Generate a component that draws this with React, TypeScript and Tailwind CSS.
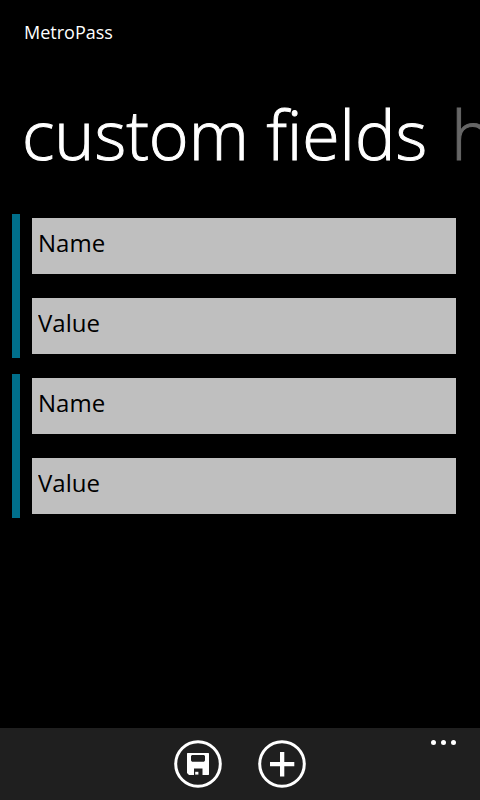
import React from "react";

const sections = [
  { title: "custom fields", active: true },
  { title: "history", active: false },
];

const customFields = [
  { id: "field-1", name: "Name", value: "Value" },
  { id: "field-2", name: "Name", value: "Value" },
];

function FieldInput({ id, label, text }: { id: string; label: string; text: string }) {
  return (
    <input
      id={id}
      type="text"
      aria-label={label}
      defaultValue={text}
      className="block h-14 w-full bg-[#bfbfbf] px-1.5 pb-2 text-2xl text-black outline-none"
    />
  );
}

function SaveIcon() {
  return (
    <svg viewBox="0 0 48 48" className="size-12" aria-hidden="true">
      <circle cx="24" cy="24" r="22.3" fill="none" stroke="#fff" strokeWidth="3" />
      <path
        fill="#fff"
        fillRule="evenodd"
        d="M13.5 13H34.5L35 13.5V34.5L34.5 35H28.5V28.5H20V35H15L13 33V13.5ZM18 15L17 16V20.5L18 21.7H30L31 20.5V16L30 15Z"
      />
      <path fill="#fff" d="M21.2 31.8H24.4V34.6H21.2Z" />
    </svg>
  );
}

function AddIcon() {
  return (
    <svg viewBox="0 0 48 48" className="size-12" aria-hidden="true">
      <circle cx="24" cy="24" r="22.3" fill="none" stroke="#fff" strokeWidth="3" />
      <path fill="#fff" d="M22 12H26.3V22H36.3V26.3H26.3V36.6H22V26.3H12V22H22Z" />
    </svg>
  );
}

function MoreIcon() {
  return (
    <svg viewBox="0 0 26 6" className="h-1.5 w-[26px]" aria-hidden="true" fill="#fff">
      <circle cx="3.5" cy="2.5" r="2.5" />
      <circle cx="13.5" cy="2.5" r="2.5" />
      <circle cx="23.5" cy="2.5" r="2.5" />
    </svg>
  );
}

export default function App() {
  return (
    <div className="flex min-h-screen flex-col overflow-hidden bg-black font-['Open_Sans','Noto_Sans',sans-serif] text-white">
      <header className="px-6 pt-5">
        <p className="text-lg leading-6">MetroPass</p>
      </header>

      <nav className="mt-10 flex gap-6 overflow-hidden pl-[22px] text-[68px] leading-[100px] font-light whitespace-nowrap [-webkit-text-stroke-width:1px]">
        {sections.map((section) =>
          section.active ? (
            <h1 key={section.title}>{section.title}</h1>
          ) : (
            <button key={section.title} type="button" className="text-[#666666]">
              {section.title}
            </button>
          )
        )}
      </nav>

      <main className="mt-[30px] flex flex-1 flex-col gap-4 pr-6 pl-3">
        {customFields.map((field) => (
          <section
            key={field.id}
            className="flex flex-col gap-6 border-l-8 border-[#006f8b] py-1 pl-3"
          >
            <FieldInput id={`${field.id}-name`} label="Field name" text={field.name} />
            <FieldInput id={`${field.id}-value`} label="Field value" text={field.value} />
          </section>
        ))}
      </main>

      <footer className="grid h-[72px] grid-cols-[1fr_auto_1fr] bg-[#1f1f1f] px-6 pt-3">
        <div className="col-start-2 flex gap-9">
          <button type="button" aria-label="Save" className="size-12">
            <SaveIcon />
          </button>
          <button type="button" aria-label="Add field" className="size-12">
            <AddIcon />
          </button>
        </div>
        <button type="button" aria-label="More" className="self-start justify-self-end">
          <MoreIcon />
        </button>
      </footer>
    </div>
  );
}
